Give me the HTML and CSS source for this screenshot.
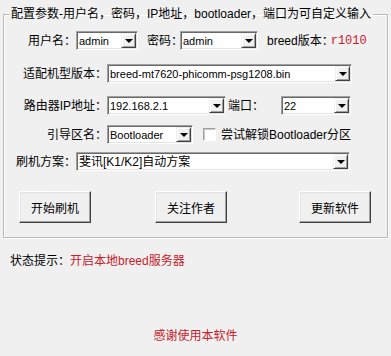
FILE: index.html
```html
<!DOCTYPE html>
<html lang="zh-CN">

<head>
    <meta charset="UTF-8" />
    <title>Breed 刷机助手</title>
    <link rel="stylesheet" href="styles.css">
</head>

<body>
    <fieldset class="group">
        <legend>配置参数-用户名，密码，IP地址，bootloader，端口为可自定义输入</legend>

        <div class="row row-1">
            <label class="lbl lbl-short">用户名：</label>
            <div class="combo combo-user"><span class="val">admin</span><span class="drop"></span></div>
            <label class="lbl lbl-pass">密码：</label>
            <div class="combo combo-pass"><span class="val">admin</span><span class="drop"></span></div>
            <span class="ver-lbl">breed版本：</span><span class="ver">r1010</span>
        </div>

        <div class="row row-2">
            <label class="lbl lbl-long">适配机型版本：</label>
            <div class="combo combo-model"><span class="val">breed-mt7620-phicomm-psg1208.bin</span><span class="drop"></span></div>
        </div>

        <div class="row row-3">
            <label class="lbl lbl-long">路由器IP地址：</label>
            <div class="combo combo-ip"><span class="val">192.168.2.1</span><span class="drop"></span></div>
            <label class="lbl lbl-port">端口：</label>
            <div class="combo combo-port"><span class="val">22</span><span class="drop"></span></div>
        </div>

        <div class="row row-4">
            <label class="lbl lbl-long">引导区名：</label>
            <div class="combo combo-boot"><span class="val">Bootloader</span><span class="drop"></span></div>
            <span class="check"></span>
            <span class="check-text">尝试解锁Bootloader分区</span>
        </div>

        <div class="row row-5">
            <label class="lbl lbl-short">刷机方案：</label>
            <div class="combo combo-plan"><span class="val val-cjk">斐讯[K1/K2]自动方案</span><span class="drop"></span></div>
        </div>

        <div class="buttons">
            <button class="btn btn-flash">开始刷机</button>
            <button class="btn btn-follow">关注作者</button>
            <button class="btn btn-update">更新软件</button>
        </div>
    </fieldset>

    <p class="status">状态提示：<span class="red">开启本地breed服务器</span></p>

    <p class="thanks">感谢使用本软件</p>
</body>

</html>
```

FILE: styles.css
```css
body {
    margin: 0;
    padding: 7px 0 0 0;
    background-color: #f0f0f0;
    color: #000;
    font-family: "Liberation Sans", "Noto Sans CJK SC", sans-serif;
    font-size: 12px;
    line-height: 14px;
}

.group {
    margin: 0 3px;
    padding: 0 0 14px 0;
    min-width: 0;
    border: 1px solid #b8b8b8;
    box-shadow: 1px 1px 0 #fff, inset 1px 1px 0 #fff;
}

.group legend {
    margin-left: 5px;
    padding: 0 2px;
    font-size: 12px;
    line-height: 14px;
}

.row {
    display: flex;
    align-items: center;
    height: 19px;
}

.row-1 {
    margin-top: 10px;
}

.row-2 {
    margin-top: 14px;
}

.row-3 {
    margin-top: 13px;
}

.row-4 {
    margin-top: 10px;
}

.row-5 {
    margin-top: 8px;
}

.lbl {
    flex: none;
    white-space: nowrap;
    text-align: right;
}

.lbl-short {
    width: 72px;
}

.lbl-long {
    width: 103px;
}

.lbl-pass {
    width: 33px;
    margin-left: 9px;
    text-align: left;
}

.lbl-port {
    width: 53px;
    margin-left: 2px;
    text-align: left;
}

/* combo boxes, classic sunken look */
.combo {
    flex: none;
    display: flex;
    box-sizing: border-box;
    height: 19px;
    background: #fff;
    border: 1px solid;
    border-color: #a0a0a0 #fff #fff #a0a0a0;
    box-shadow: inset 1px 1px 0 #696969, inset -1px -1px 0 #e3e3e3;
}

.combo .val {
    flex: 1;
    padding-left: 2px;
    padding-top: 1px;
    font-size: 11px;
    line-height: 16px;
    white-space: nowrap;
    overflow: hidden;
}

.combo .val-cjk {
    font-size: 12px;
}

.combo .drop {
    flex: none;
    display: flex;
    align-items: center;
    justify-content: center;
    box-sizing: border-box;
    width: 15px;
    margin: 1px 1px 1px 0;
    background: #f0f0f0;
    border: 1px solid;
    border-color: #f0f0f0 #404040 #404040 #f0f0f0;
    box-shadow: inset 1px 1px 0 #fff, inset -1px -1px 0 #a0a0a0;
}

.combo .drop::after {
    content: "";
    width: 0;
    height: 0;
    margin-top: 1px;
    border-left: 4px solid transparent;
    border-right: 4px solid transparent;
    border-top: 4px solid #000;
}

.combo-user {
    width: 62px;
}

.combo-pass {
    width: 78px;
}

.combo-model {
    width: 245px;
}

.combo-ip {
    width: 119px;
}

.combo-port {
    width: 70px;
}

.combo-boot {
    width: 86px;
}

.combo-plan {
    width: 274px;
}

.ver-lbl {
    margin-left: 9px;
    white-space: nowrap;
}

.ver {
    margin-left: -3px;
    color: #c8202a;
    font-family: "Liberation Mono", monospace;
    font-size: 12px;
}

.check {
    flex: none;
    box-sizing: border-box;
    width: 13px;
    height: 13px;
    margin-left: 10px;
    background: #fff;
    border: 1px solid;
    border-color: #a0a0a0 #fff #fff #a0a0a0;
    box-shadow: inset 1px 1px 0 #c8c8c8;
}

.check-text {
    margin-left: 5px;
    white-space: nowrap;
}

.buttons {
    display: flex;
    margin-top: 20px;
    padding-left: 15px;
}

.btn {
    box-sizing: border-box;
    width: 72px;
    height: 32px;
    padding: 0;
    background: #f0f0f0;
    border: 1px solid;
    border-color: #fff #404040 #404040 #fff;
    box-shadow: inset -1px -1px 0 #a0a0a0, inset 1px 1px 0 #e3e3e3;
    font-family: "Noto Sans CJK SC", sans-serif;
    font-size: 12px;
    color: #000;
}

.btn-follow {
    margin-left: 64px;
}

.btn-update {
    margin-left: 72px;
}

.status {
    margin: 16px 0 0 10px;
}

.red {
    color: #c8202a;
}

.thanks {
    margin: 61px 0 0 0;
    text-align: center;
    color: #c8202a;
}
```
